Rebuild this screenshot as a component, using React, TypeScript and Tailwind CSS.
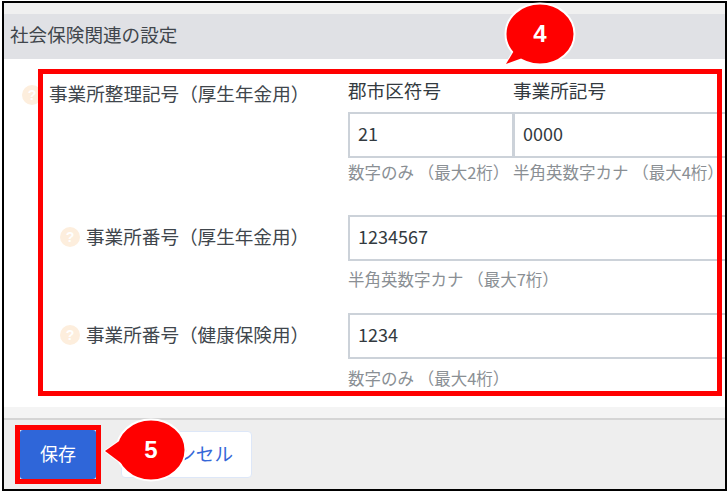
const font = "font-['Noto_Sans_CJK_JP','Noto_Sans',sans-serif]";

// 吹き出し番号（注釈）
function Bubble({ n, tail, className }: { n: string; tail: string; className: string }) {
  return (
    <div className={`absolute h-[84px] w-[84px] ${className}`}>
      <svg width="84" height="84" viewBox="0 0 84 84" className="absolute inset-0 overflow-visible">
        <path d={tail} fill="#ff0000" stroke="#ffffff" strokeWidth="2" />
        <ellipse cx="42" cy="42" rx="34.5" ry="30.5" fill="#ff0000" stroke="#ffffff" strokeWidth="2" />
        <path d={tail} fill="#ff0000" />
      </svg>
      <span className="absolute inset-0 flex items-center justify-center font-['Liberation_Sans',sans-serif] text-[24px] font-bold text-white">
        {n}
      </span>
    </div>
  );
}

function Help({ className }: { className: string }) {
  return (
    <span className={`flex h-[20px] w-[20px] shrink-0 items-center justify-center rounded-full bg-[#fdeedd] font-['Liberation_Sans',sans-serif] text-[14px] font-bold text-white ${className}`}>
      ?
    </span>
  );
}

function Field({ value, className }: { value: string; className: string }) {
  return (
    <input
      readOnly
      defaultValue={value}
      className={`h-[46px] shrink-0 border-2 border-[#ccd2d9] bg-white pb-[4px] pl-[8px] text-[18px] text-[#333a40] outline-none ${font} ${className}`}
    />
  );
}

export default function App() {
  return (
    <div className={`relative h-[494px] w-[728px] overflow-hidden bg-white pl-[2px] pr-px pt-px ${font}`}>
      <div className="flex h-[490px] flex-col overflow-hidden border-2 border-black bg-white">
        <div className="h-[11px] bg-[#f0f0f0]" />
        <div className="flex h-[45px] items-center bg-[#e0e1e5] pb-[6px] pl-[6px] text-[18.6px] text-[#40464c]">
          社会保険関連の設定
        </div>

        <div className="flex h-[348px] flex-col pt-[20px]">
          {/* 事業所整理記号 */}
          <div className="flex h-[125px]">
            <div className="flex w-[344px] shrink-0 items-start pl-[18px] pt-[4px]">
              <Help className="mt-[2px]" />
              <span className="whitespace-nowrap pl-[7px] text-[18.6px] leading-[20px] text-[#40464c]">
                事業所整理記号（厚生年金用）
              </span>
            </div>
            <div className="flex min-w-0 flex-1 flex-col">
              <div className="flex h-[33px] pt-px text-[18.6px] leading-[20px] text-[#333a40]">
                <span className="w-[165px]">郡市区符号</span>
                <span>事業所記号</span>
              </div>
              <div className="flex">
                <Field value="21" className="w-[166px]" />
                <Field value="0000" className="-ml-[1px] w-[240px]" />
              </div>
              <div className="flex pt-[3px] text-[16.5px] leading-[22px] text-[#8a8f94]">
                <span className="w-[165px] whitespace-nowrap">数字のみ （最大2桁）</span>
                <span className="whitespace-nowrap">半角英数字カナ （最大4桁）</span>
              </div>
            </div>
          </div>

          {/* 事業所番号（厚生年金用） */}
          <div className="flex h-[109px] pt-[11px]">
            <div className="flex w-[344px] shrink-0 items-start gap-[6px] pl-[56px] pt-[11px]">
              <Help className="mt-px" />
              <span className="whitespace-nowrap text-[18.6px] leading-[20px] text-[#40464c]">事業所番号（厚生年金用）</span>
            </div>
            <div className="flex min-w-0 flex-1 flex-col">
              <Field value="1234567" className="w-[400px]" />
              <div className="pt-[7px] text-[16.5px] leading-[22px] text-[#8a8f94]">半角英数字カナ （最大7桁）</div>
            </div>
          </div>

          {/* 事業所番号（健康保険用） */}
          <div className="flex">
            <div className="flex w-[344px] shrink-0 items-start gap-[6px] pl-[56px] pt-[11px]">
              <Help className="mt-px" />
              <span className="whitespace-nowrap text-[18.6px] leading-[20px] text-[#40464c]">事業所番号（健康保険用）</span>
            </div>
            <div className="flex min-w-0 flex-1 flex-col">
              <Field value="1234" className="w-[400px]" />
              <div className="pt-[8px] text-[16.5px] leading-[22px] text-[#8a8f94]">数字のみ （最大4桁）</div>
            </div>
          </div>
        </div>

        <div className="h-[13px] border-b-2 border-[#d5d5d5] bg-[#f4f4f4]" />
        <div className="flex flex-1 items-start gap-[25px] bg-[#eeeeee] pl-[16px] pt-[10px]">
          <button className="flex h-[49px] w-[76px] items-center justify-center rounded-[3px] bg-[#2f66d9] pb-[3px] text-[18px] text-white">
            保存
          </button>
          <button className="mt-px flex h-[47px] w-[131px] items-center justify-center rounded-[4px] border border-[#dde7f8] bg-white pb-[3px] text-[18.6px] text-[#3567d8]">
            キャンセル
          </button>
        </div>
      </div>

      {/* 注釈の赤枠 */}
      <div className="absolute left-[38px] top-[69px] h-[327px] w-[684px] border-[5px] border-[#ff0000]" />
      <div className="absolute left-[15px] top-[425px] h-[59px] w-[86px] border-[5px] border-[#ff0000]" />

      <Bubble n="4" tail="M20 52 L8 72 L30 64 Z" className="left-[498px] top-[-8px]" />
      <Bubble n="5" tail="M16 29 L-4 43 L16 58 Z" className="left-[109px] top-[408px]" />
    </div>
  );
}
